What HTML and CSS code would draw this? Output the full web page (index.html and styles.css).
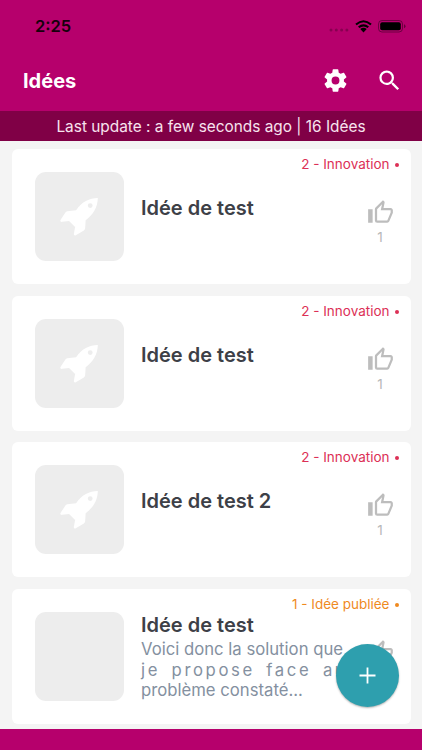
FILE: index.html
```html
<!DOCTYPE html>
<html lang="fr">
<head>
  <meta charset="UTF-8">
  <meta name="viewport" content="width=device-width, initial-scale=1.0">
  <title>Idées</title>
  <link rel="stylesheet" href="styles.css">
</head>
<body>
<svg class="sprite" width="0" height="0">
  <symbol id="rocket" viewBox="0 0 40 40">
    <path fill-rule="evenodd" d="M38.8 1C30 1.200 22.500 4.500 16.500 13.600L7.500 14.500C6.500 14.700 6 15.200 5.500 16L.5 23.700C0 24.800.8 25.700 2 25.500L9.300 24.500L15.500 30.800L14.200 37.800C14 39 15 39.800 16.200 39.200L24.500 34.300C25.200 33.800 25.700 33.200 25.800 32.300L26.300 23.800C34.500 17.500 38.500 10.500 38.800 1ZM31 6.300A2.500 2.500 0 1 1 31 11.300A2.500 2.500 0 0 1 31 6.300Z"/>
  </symbol>
  <symbol id="thumb" viewBox="0 0 24 24">
    <path d="M5,9V21H1V9H5M9,21A2,2 0 0,1 7,19V9C7,8.450 7.220,7.950 7.590,7.590L14.170,1L15.230,2.060C15.500,2.330 15.670,2.700 15.670,3.110L15.640,3.430L14.690,8H21C22.110,8 23,8.900 23,10V12C23,12.260 22.950,12.500 22.860,12.730L19.840,19.780C19.540,20.500 18.830,21 18,21H9M9,19H18.030L21,12V10H12.210L13.340,4.680L9,9.030V19Z"/>
  </symbol>
</svg>

<div class="app">
  <header class="header">
    <div class="status-bar">
      <span class="time">2:25</span>
      <div class="status-icons">
        <svg class="signal" width="20" height="4" viewBox="0 0 20 4">
          <circle cx="2" cy="2" r="1.500"/><circle cx="7.300" cy="2" r="1.500"/><circle cx="12.600" cy="2" r="1.500"/><circle cx="17.900" cy="2" r="1.500"/>
        </svg>
        <svg class="wifi" width="17" height="13" viewBox="0 0 17 13">
          <path d="M1 4.500Q8.500-2 16 4.500M3.700 7.300Q8.500 3.300 13.300 7.300" fill="none" stroke="#000" stroke-width="2.100"/>
          <path d="M5.300 9Q8.500 6.500 11.700 9L8.500 12.400Z"/>
        </svg>
        <svg class="battery" width="28" height="13" viewBox="0 0 28 13">
          <rect x=".5" y=".5" width="24" height="11.500" rx="3.500" fill="none" stroke="#000" stroke-opacity=".4"/>
          <rect x="2.200" y="2.200" width="20.600" height="8.100" rx="2"/>
          <path d="M26 4.300Q27.500 4.800 27.500 6.250T26 8.200Z" opacity=".45"/>
        </svg>
      </div>
    </div>
    <div class="toolbar">
      <h1>Idées</h1>
      <div class="actions">
        <svg width="27" height="27" viewBox="0 0 24 24">
          <path d="M12,15.500A3.500,3.500 0 0,1 8.500,12A3.500,3.500 0 0,1 12,8.500A3.500,3.500 0 0,1 15.500,12A3.500,3.500 0 0,1 12,15.500M19.430,12.970C19.470,12.650 19.500,12.330 19.500,12C19.500,11.670 19.470,11.340 19.430,11L21.540,9.370C21.730,9.220 21.780,8.950 21.660,8.730L19.660,5.270C19.540,5.050 19.270,4.960 19.050,5.050L16.560,6.050C16.040,5.660 15.500,5.320 14.870,5.070L14.500,2.420C14.460,2.180 14.250,2 14,2H10C9.750,2 9.540,2.180 9.500,2.420L9.130,5.070C8.500,5.320 7.960,5.660 7.440,6.050L4.950,5.050C4.730,4.960 4.460,5.050 4.340,5.270L2.340,8.730C2.210,8.950 2.270,9.220 2.460,9.370L4.570,11C4.530,11.340 4.500,11.670 4.500,12C4.500,12.330 4.530,12.650 4.570,12.970L2.460,14.630C2.270,14.780 2.210,15.050 2.340,15.270L4.340,18.730C4.460,18.950 4.730,19.030 4.950,18.950L7.440,17.940C7.960,18.340 8.500,18.680 9.130,18.930L9.500,21.580C9.540,21.820 9.750,22 10,22H14C14.250,22 14.460,21.820 14.500,21.580L14.870,18.930C15.500,18.670 16.040,18.340 16.560,17.940L19.050,18.950C19.270,19.030 19.540,18.950 19.660,18.730L21.660,15.270C21.780,15.050 21.730,14.780 21.540,14.630L19.430,12.970Z"/>
        </svg>
        <svg width="27" height="27" viewBox="0 0 24 24">
          <path d="M15.500 14h-.79l-.28-.27A6.471 6.471 0 0 0 16 9.500 6.500 6.500 0 1 0 9.500 16c1.610 0 3.090-.59 4.230-1.570l.27.28v.79l5 4.990L20.490 19l-4.990-5zm-6 0C7.010 14 5 11.990 5 9.500S7.010 5 9.500 5 14 7.010 14 9.500 11.990 14 9.500 14z"/>
        </svg>
      </div>
    </div>
  </header>
  <div class="update">Last update : a few seconds ago | 16 Idées</div>

  <main class="list">
    <article class="card">
      <div class="thumbnail"><svg width="39" height="39"><use href="#rocket"/></svg></div>
      <div class="content">
        <h2>Idée de test</h2>
      </div>
      <div class="side">
        <span class="state">2 - Innovation <i class="dot"></i></span>
        <div class="likes"><svg width="27" height="27"><use href="#thumb"/></svg><span>1</span></div>
      </div>
    </article>
    <article class="card">
      <div class="thumbnail"><svg width="39" height="39"><use href="#rocket"/></svg></div>
      <div class="content">
        <h2>Idée de test</h2>
      </div>
      <div class="side">
        <span class="state">2 - Innovation <i class="dot"></i></span>
        <div class="likes"><svg width="27" height="27"><use href="#thumb"/></svg><span>1</span></div>
      </div>
    </article>
    <article class="card">
      <div class="thumbnail"><svg width="39" height="39"><use href="#rocket"/></svg></div>
      <div class="content">
        <h2>Idée de test 2</h2>
      </div>
      <div class="side">
        <span class="state">2 - Innovation <i class="dot"></i></span>
        <div class="likes"><svg width="27" height="27"><use href="#thumb"/></svg><span>1</span></div>
      </div>
    </article>
    <article class="card">
      <div class="thumbnail"></div>
      <div class="content with-text">
        <h2>Idée de test</h2>
        <p><span class="line">Voici donc la solution que</span> <span class="line wide">je propose face au</span> <span class="line">problème constaté...</span></p>
      </div>
      <div class="side">
        <span class="state published">1 - Idée publiée <i class="dot"></i></span>
        <div class="likes"><svg width="27" height="27"><use href="#thumb"/></svg></div>
      </div>
    </article>
  </main>
  <footer class="footer"></footer>

  <button class="fab" aria-label="Ajouter">
    <svg width="17" height="17" viewBox="0 0 17 17"><path d="M8.500 .5V16.500M.5 8.500H16.500" stroke="#fff" stroke-width="1.800"/></svg>
  </button>
</div>
</body>
</html>
```
FILE: styles.css
```css
* {
  box-sizing: border-box;
}
body {
  margin: 0;
  font-family: Inter, "Liberation Sans", sans-serif;
  background-color: #f4f4f4;
}
h1, h2, p {
  margin: 0;
}
.sprite {
  display: block;
}
.app {
  position: relative;
  width: 422px;
  height: 750px;
  overflow: hidden;
  display: flex;
  flex-direction: column;
}
.header {
  height: 111px;
  flex: none;
  background-color: #b6006c;
}
.status-bar {
  height: 50px;
  padding: 2px 16px 0 35px;
  display: flex;
  align-items: center;
  justify-content: space-between;
}
.time {
  font-size: 16.5px;
  font-weight: 600;
  color: #16000c;
}
.status-icons {
  display: flex;
  align-items: center;
  gap: 6px;
}
.signal {
  fill: rgba(0, 0, 0, 0.25);
  margin-top: 8px;
}
.toolbar {
  height: 60px;
  padding: 0 19px 0 23px;
  display: flex;
  align-items: center;
  justify-content: space-between;
}
.toolbar h1 {
  font-size: 20px;
  font-weight: 700;
  line-height: 26px;
  padding-top: 1px;
  color: #fff;
}
.actions {
  display: flex;
  gap: 27px;
  fill: #fff;
}
.update {
  height: 30px;
  flex: none;
  background-color: #800046;
  color: #f7e3ee;
  font-size: 15.4px;
  line-height: 32px;
  text-align: center;
  white-space: nowrap;
}
.list {
  flex: 1;
  min-height: 0;
  padding: 8.4px 11.5px 0;
  display: flex;
  flex-direction: column;
  gap: 11.5px;
  overflow: hidden;
}
.card {
  height: 135px;
  flex: none;
  padding-left: 23px;
  display: flex;
  background-color: #fff;
  border-radius: 6px;
}
.thumbnail {
  width: 89px;
  height: 89px;
  margin-top: 23px;
  flex: none;
  display: flex;
  align-items: center;
  justify-content: center;
  background-color: #ededed;
  border-radius: 11px;
  fill: #fff;
}
.content {
  width: 203.5px;
  margin-left: 17.5px;
  padding-top: 46px;
  flex: none;
  white-space: nowrap;
}
.content h2 {
  font-size: 20px;
  line-height: 26px;
  font-weight: 600;
  color: #3d4047;
}
.with-text {
  padding-top: 23.5px;
}
.content p {
  margin-top: 0.8px;
  font-size: 16.7px;
  line-height: 20.5px;
  color: #8490a0;
}
.line {
  display: block;
}
.wide {
  letter-spacing: 2.6px;
  word-spacing: 4.3px;
}
.side {
  flex: 1;
  min-width: 0;
  padding: 6px 12px 0 0;
  display: flex;
  flex-direction: column;
  align-items: flex-end;
}
.state {
  display: flex;
  align-items: center;
  gap: 5px;
  font-size: 13.5px;
  line-height: 18px;
  white-space: nowrap;
  color: #dc3056;
}
.published {
  color: #ef8a1f;
}
.dot {
  width: 4px;
  height: 4px;
  margin-top: 2px;
  border-radius: 50%;
  background-color: currentColor;
}
.likes {
  width: 27px;
  margin: 26px 5px 0 0;
  display: flex;
  flex-direction: column;
  align-items: center;
  fill: #bdbdbd;
  font-size: 13.5px;
  line-height: 18px;
  color: #b8b8b8;
}
.likes span {
  margin-top: 2px;
}
.footer {
  height: 21px;
  flex: none;
  background-color: #b6006c;
}
.fab {
  position: absolute;
  right: 23px;
  bottom: 43px;
  width: 63px;
  height: 63px;
  padding: 0;
  display: flex;
  align-items: center;
  justify-content: center;
  border: 0;
  border-radius: 50%;
  background-color: #2e9fae;
  box-shadow: 0 1px 2px rgba(0, 0, 0, 0.3);
}
```
